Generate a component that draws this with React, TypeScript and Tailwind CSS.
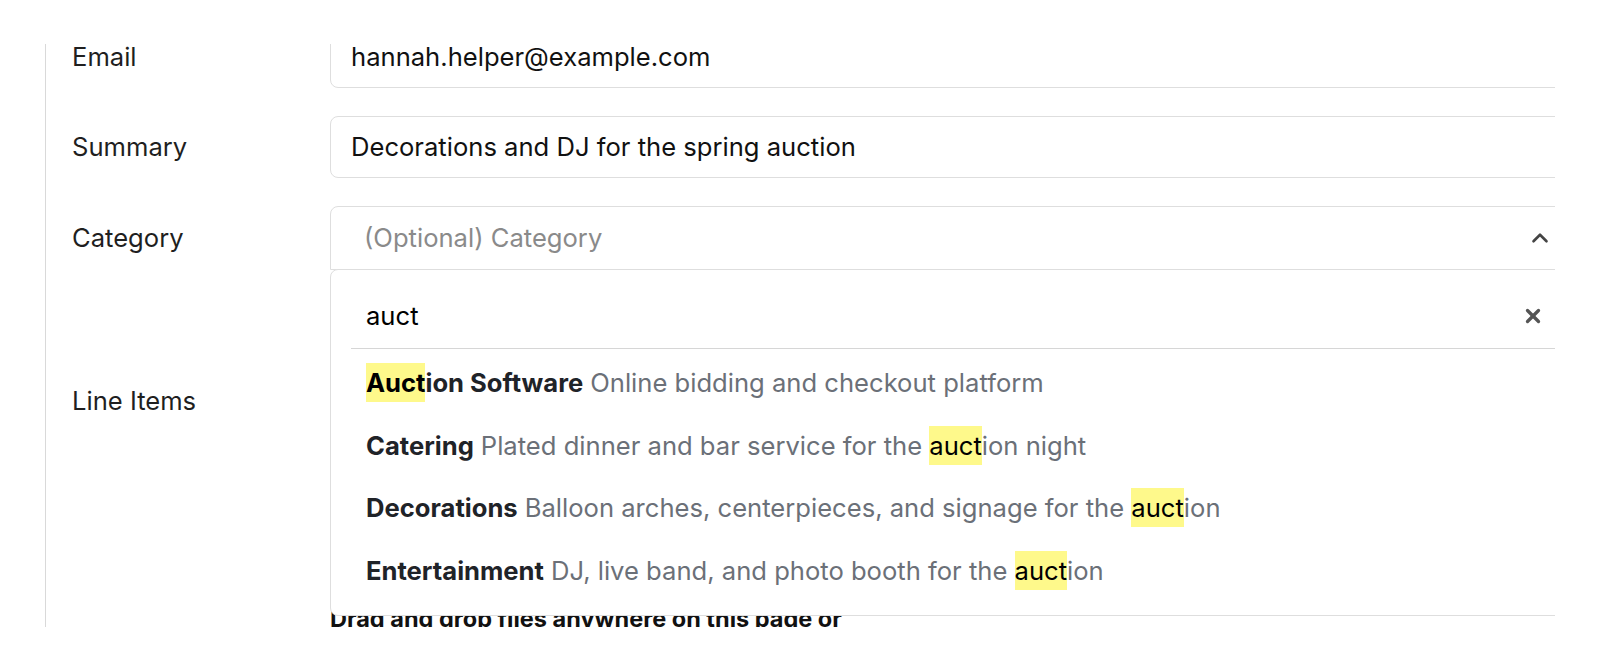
import { ChevronUp, X } from 'lucide-react';

type Option = {
  title: string;
  description: string;
};

const options: Option[] = [
  { title: 'Auction Software', description: 'Online bidding and checkout platform' },
  { title: 'Catering', description: 'Plated dinner and bar service for the auction night' },
  { title: 'Decorations', description: 'Balloon arches, centerpieces, and signage for the auction' },
  { title: 'Entertainment', description: 'DJ, live band, and photo booth for the auction' },
];

const query = 'auct';

// wraps the first match of the query in a yellow mark
function Highlight({ text, className }: { text: string; className: string }) {
  const idx = text.toLowerCase().indexOf(query);
  if (idx < 0) return <span className={className}>{text}</span>;
  return (
    <span className={className}>
      {text.slice(0, idx)}
      <mark className="bg-[#fef98b] py-[4px] text-black">{text.slice(idx, idx + query.length)}</mark>
      {text.slice(idx + query.length)}
    </span>
  );
}

function Label({ children }: { children: React.ReactNode }) {
  return <div className="w-[258px] shrink-0 text-[25.6px] text-[#1f1f1f]">{children}</div>;
}

export default function App() {
  return (
    <div className="h-[671px] w-[1600px] bg-white pt-[44px] font-['Inter','Noto_Sans',sans-serif]">
      <div className="ml-[45px] h-[583px] w-[1510px] overflow-hidden border-l border-[#d9d9d9]">
        <div className="-mt-[18px] flex flex-col gap-[28px] pl-[26px]">
          <div className="flex items-center">
            <Label>Email</Label>
            <div className="flex h-[62px] w-[1260px] shrink-0 items-center rounded-lg border border-[#dedede] px-[20px] text-[25.6px] text-[#111]">
              hannah.helper@example.com
            </div>
          </div>

          <div className="flex items-center">
            <Label>Summary</Label>
            <div className="flex h-[62px] w-[1260px] shrink-0 items-center rounded-lg border border-[#dedede] px-[20px] text-[25.6px] text-[#111]">
              Decorations and DJ for the spring auction
            </div>
          </div>

          <div className="flex items-center">
            <Label>Category</Label>
            <div className="relative w-[1260px] shrink-0">
              <div className="flex h-[64px] items-center justify-between rounded-t-lg border border-[#dedede] pl-[33px] pr-[36px]">
                <span className="text-[25.6px] text-[#8a8a8a]">(Optional) Category</span>
                <ChevronUp size={26} strokeWidth={2.4} className="text-[#444]" />
              </div>

              {/* open listbox */}
              <div className="absolute left-0 right-0 top-[63px] z-10 rounded-lg border border-[#dedede] bg-white pb-[13px]">
                <div className="ml-[20px] flex h-[79px] items-center justify-between border-b border-[#d6d6d6] pl-[15px] pr-[45px] pt-[14px]">
                  <span className="text-[25.6px] text-black">auct</span>
                  <X size={22} strokeWidth={3.6} className="text-[#555]" />
                </div>
                <ul className="pt-[3px]">
                  {options.map((o) => (
                    <li key={o.title} className="flex h-[62.5px] items-center gap-[7px] pl-[35px] text-[25.6px]">
                      <Highlight text={o.title} className="font-bold text-[#1f2328]" />
                      <Highlight text={o.description} className="text-[#6b7078]" />
                    </li>
                  ))}
                </ul>
              </div>
            </div>
          </div>

          <div className="flex items-center">
            <Label>Line Items</Label>
            <div className="h-[206px] w-[1260px] shrink-0" />
          </div>

          <div className="pl-[258px] pt-[72px] text-[23.5px] font-bold leading-[30px] text-[#111]">
            Drag and drop files anywhere on this page or
          </div>
        </div>
      </div>
    </div>
  );
}
